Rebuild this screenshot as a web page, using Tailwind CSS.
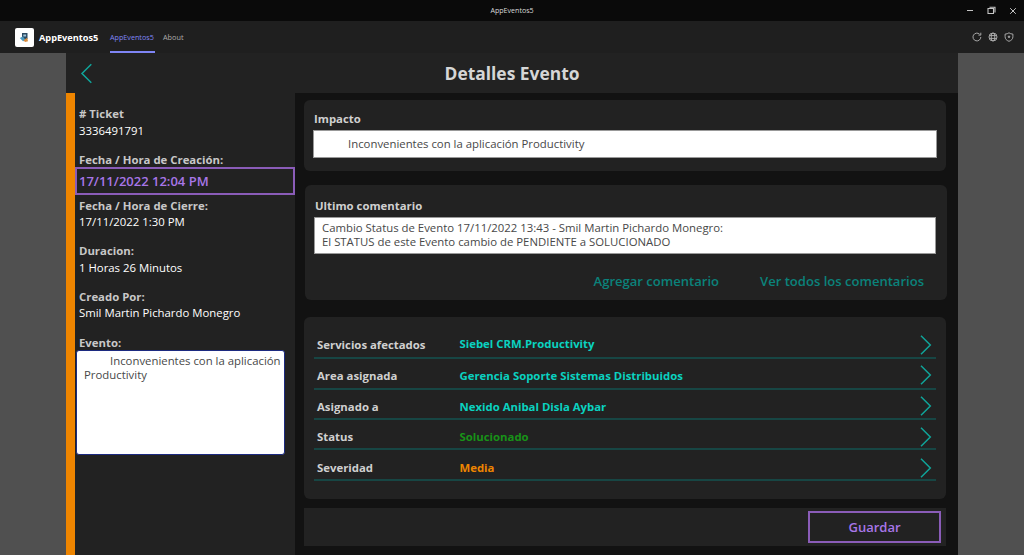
<!DOCTYPE html>
<html lang="es">
<head>
<meta charset="utf-8">
<title>AppEventos5</title>
<script src="https://cdn.jsdelivr.net/npm/@tailwindcss/browser@4"></script>
</head>
<body class="w-[1024px] h-[555px] overflow-hidden flex flex-col bg-[#505050] font-['Open_Sans',sans-serif] whitespace-nowrap text-[11.36px]">
  <!-- Window title bar -->
  <div class="h-[21px] shrink-0 bg-[#0a0a0a] grid grid-cols-[1fr_auto_1fr] items-center text-[7.1px] text-[#d8d8d8]">
    <span></span>
    <span>AppEventos5</span>
    <div class="flex justify-end items-center gap-[13px] pr-[7px] text-[#c4c4c4]">
      <svg width="8" height="8" viewBox="0 0 8 8" fill="none" stroke="currentColor"><path d="M1 3.500h6"/></svg>
      <svg width="9" height="9" viewBox="0 0 9 9" fill="none" stroke="currentColor" stroke-width="1.100"><path d="M1 2.500h5.500v5H1zM2.500 1.200h5.500v5.300"/></svg>
      <svg width="8" height="8" viewBox="0 0 8 8" fill="none" stroke="currentColor"><path d="M1.200 1.200l5.600 5.600M6.800 1.200L1.200 6.800"/></svg>
    </div>
  </div>
  <!-- App bar -->
  <div class="h-8 shrink-0 bg-[#1f1f1f] flex items-center pl-[15px] pr-[10px]">
    <div class="w-[19px] h-[19px] rounded-[2px] bg-white flex items-center justify-center">
      <svg width="11" height="11" viewBox="0 0 11 11"><path d="M3 1h5.500v6H3z" fill="#2b4a63"/><path d="M4.300 2.500h2.800v2H4.300z" fill="#9fc3d8"/><path d="M.8 6l3-1.400L7 8.500 4 9.200z" fill="#4b9ac0"/><path d="M4.500 8.200l3.600-2.400L9 9.200 6 10z" fill="#d98a3c"/></svg>
    </div>
    <span class="ml-[5px] w-[71px] pt-px font-bold text-[9.2px] text-white">AppEventos5</span>
    <div class="h-8 w-[45px] border-b-2 border-[#7f85f5] pt-[3px] flex items-center text-[7.2px] text-[#7f85f5]">AppEventos5</div>
    <span class="ml-2 pt-px text-[7.3px] text-[#adadad]">About</span>
    <div class="ml-auto flex gap-[6px] text-[#a8a8a8]">
      <svg width="10" height="10" viewBox="0 0 10 10" fill="none" stroke="currentColor"><path d="M8.800 5a3.900 3.900 0 1 1-1.200-2.800M8.800.7v2.400H6.400"/></svg>
      <svg width="10" height="10" viewBox="0 0 10 10" fill="none" stroke="currentColor"><circle cx="5" cy="5" r="4"/><ellipse cx="5" cy="5" rx="1.800" ry="4"/><path d="M1.300 3.600h7.400M1.300 6.400h7.400"/></svg>
      <svg width="10" height="10" viewBox="0 0 10 10" fill="none" stroke="currentColor"><path d="M5 .8c1.200.9 2.300 1.200 3.900 1.300v2.600C8.900 7 7.400 8.500 5 9.300 2.600 8.500 1.100 7 1.100 4.700V2.100C2.700 2 3.800 1.700 5 .8z"/><circle cx="5" cy="4.800" r=".8" fill="currentColor"/></svg>
    </div>
  </div>
  <!-- App content -->
  <div class="ml-[66px] w-[892px] flex-1 min-h-0 bg-[#121212] flex flex-col">
    <div class="h-[40px] shrink-0 bg-[#222] grid grid-cols-[40px_1fr_40px] items-center">
      <svg class="ml-[14px]" width="14" height="22" viewBox="0 0 14 22" fill="none" stroke="#10a59a" stroke-width="1.500"><path d="M11.300 2.300L2 11.500l9.300 9.200"/></svg>
      <h1 class="text-center font-bold text-[17.4px] leading-10 text-[#d6d6d6]">Detalles Evento</h1>
    </div>
    <div class="flex-1 min-h-0 flex">
      <div class="w-[9px] shrink-0 bg-[#ee8500]"></div>
      <!-- Ticket summary -->
      <aside class="w-[220px] shrink-0 bg-[#222] pt-[13px] text-white">
        <div class="h-[46px] pl-1"><div class="h-4 leading-4 font-bold text-[#c8c8c8]"># Ticket</div><div class="h-[17px] leading-[17px]">3336491791</div></div>
        <div class="h-[46px]"><div class="h-[15px] leading-4 pl-1 font-bold text-[#c8c8c8]">Fecha / Hora de Creación:</div><div class="h-[28px] pl-[2px] pt-px border-2 border-[#8a5cb8] flex items-center font-semibold text-[13px] text-[#a876e8]">17/11/2022 12:04 PM</div></div>
        <div class="h-[45px] pl-1"><div class="h-4 leading-4 font-bold text-[#c8c8c8]">Fecha / Hora de Cierre:</div><div class="h-[17px] leading-4">17/11/2022 1:30 PM</div></div>
        <div class="h-[46px] pl-1"><div class="h-4 leading-4 font-bold text-[#c8c8c8]">Duracion:</div><div class="h-[17px] leading-[17px]">1 Horas 26 Minutos</div></div>
        <div class="h-[46px] pl-1"><div class="h-4 leading-4 font-bold text-[#c8c8c8]">Creado Por:</div><div class="h-[17px] leading-4">Smil Martin Pichardo Monegro</div></div>
        <div class="h-[15px] leading-4 pl-1 font-bold text-[#c8c8c8]">Evento:</div>
        <div class="ml-px w-[209px] h-[105px] rounded-[3px] bg-white border border-[#1c2a80] pt-[3px] pl-[7px] leading-[14px] text-[#484848]"><span class="pl-[26px]">Inconvenientes con la aplicación</span><br>Productivity</div>
      </aside>
      <main class="flex-1 flex flex-col pl-[9px] pt-[7px]">
        <section class="w-[642px] h-[71px] shrink-0 rounded-[6px] bg-[#222] pl-[9px] pt-[10px]">
          <h2 class="h-5 leading-[17px] pl-px font-bold text-[#d0d0d0]">Impacto</h2>
          <div class="w-[624px] h-[28px] bg-white border border-[#999] pl-[34px] leading-[26px] text-[#484848]">Inconvenientes con la aplicación Productivity</div>
        </section>
        <section class="ml-px mt-[14px] w-[642px] h-[115px] shrink-0 rounded-[6px] bg-[#222] pl-[9px] pt-[12px]">
          <h2 class="h-5 leading-[17px] pl-px font-bold text-[#d0d0d0]">Ultimo comentario</h2>
          <div class="w-[622px] h-[37px] bg-white border border-[#999] pl-[7px] pt-[3px] leading-[14px] text-[#484848]">Cambio Status de Evento 17/11/2022 13:43 - Smil Martin Pichardo Monegro:<br>El STATUS de este Evento cambio de PENDIENTE a SOLUCIONADO</div>
          <div class="mt-[17px] flex justify-end gap-[41px] pr-[23px] font-semibold text-[13.05px] leading-5 text-[#0b827b]"><span>Agregar comentario</span><span>Ver todos los comentarios</span></div>
        </section>
        <section class="mt-[17px] w-[642px] h-[182px] shrink-0 rounded-[6px] bg-[#222] px-[10px] pt-[12px] font-bold text-[#d0d0d0]">
          <div class="h-[30px] border-b-2 border-[#174644] pl-[3px] flex items-center"><span class="w-[142.500px] pt-[3px]">Servicios afectados</span><span class="pt-px text-[#0ad2c0]">Siebel CRM.Productivity</span><svg class="ml-auto mr-[3px] mt-[3px]" width="14" height="22" viewBox="0 0 14 22" fill="none" stroke="#10a59a" stroke-width="1.500"><path d="M2 1.800l9.300 9.200L2 20.200"/></svg></div>
          <div class="h-[31px] border-b-2 border-[#174644] pl-[3px] flex items-center"><span class="w-[142.500px] pt-[5px]">Area asignada</span><span class="pt-[5px] text-[#0ad2c0]">Gerencia Soporte Sistemas Distribuidos</span><svg class="ml-auto mr-[3px] mt-[3px]" width="14" height="22" viewBox="0 0 14 22" fill="none" stroke="#10a59a" stroke-width="1.500"><path d="M2 1.800l9.300 9.200L2 20.200"/></svg></div>
          <div class="h-[30px] border-b-2 border-[#174644] pl-[3px] flex items-center"><span class="w-[142.500px] pt-[5px]">Asignado a</span><span class="pt-[5px] text-[#0ad2c0]">Nexido Anibal Disla Aybar</span><svg class="ml-auto mr-[3px] mt-[4px]" width="14" height="22" viewBox="0 0 14 22" fill="none" stroke="#10a59a" stroke-width="1.500"><path d="M2 1.800l9.300 9.200L2 20.200"/></svg></div>
          <div class="h-[30px] border-b-2 border-[#174644] pl-[3px] flex items-center"><span class="w-[142.500px] pt-[5px]">Status</span><span class="pt-[5px] text-[#189218]">Solucionado</span><svg class="ml-auto mr-[3px] mt-[5px]" width="14" height="22" viewBox="0 0 14 22" fill="none" stroke="#10a59a" stroke-width="1.500"><path d="M2 1.800l9.300 9.200L2 20.200"/></svg></div>
          <div class="h-[31px] border-b-2 border-[#174644] pl-[3px] flex items-center"><span class="w-[142.500px] pt-[7px]">Severidad</span><span class="pt-[7px] text-[#ee8500]">Media</span><svg class="ml-auto mr-[3px] mt-[6px]" width="14" height="22" viewBox="0 0 14 22" fill="none" stroke="#10a59a" stroke-width="1.500"><path d="M2 1.800l9.300 9.200L2 20.200"/></svg></div>
        </section>
        <footer class="mt-[9px] w-[642px] h-[38px] shrink-0 bg-[#222] flex items-center justify-end pr-[5px]">
          <button class="w-[133px] h-[32px] pt-px border-2 border-[#8a5cb8] font-semibold text-[13px] text-[#a876e8]">Guardar</button>
        </footer>
      </main>
    </div>
  </div>
</body>
</html>
